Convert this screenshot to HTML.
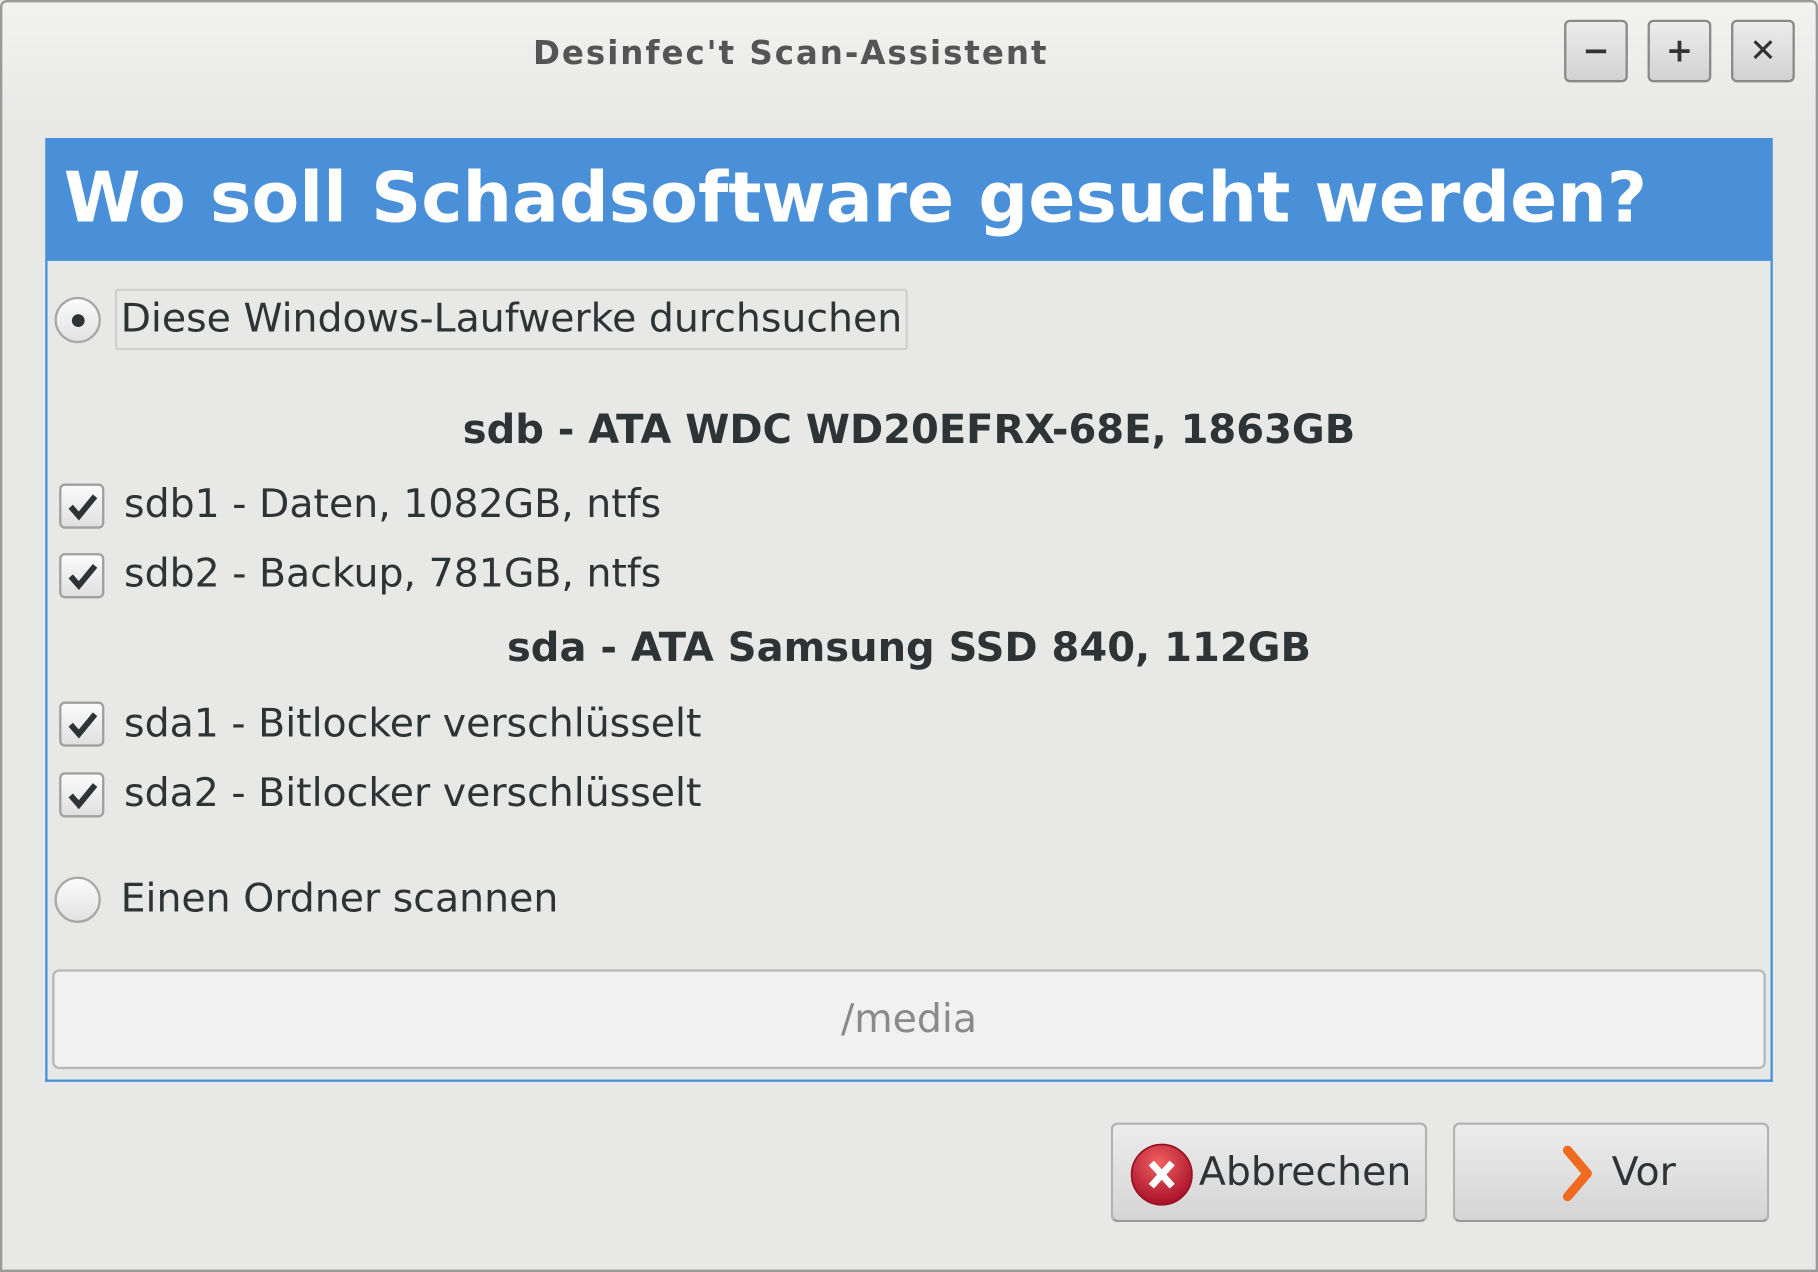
<!DOCTYPE html>
<html><head><meta charset="utf-8"><style>
*{margin:0;padding:0;box-sizing:border-box}
html,body{width:1818px;height:1272px;overflow:hidden;background:#e8e8e7}
#s{position:absolute;left:0;top:0;width:1568px;height:1097px;transform:scale(1.15944,1.15953);transform-origin:0 0;font-family:"DejaVu Sans","Liberation Sans",sans-serif;color:#2e3436}
.win{position:absolute;left:0;top:0;width:1568px;height:1097px;border:2px solid #9a9a9a;border-radius:6px 6px 0 0;background:linear-gradient(#f2f2f1 0,#e8e8e7 110px)}
.title{position:absolute;left:0;width:1364px;top:29px;text-align:center;font-weight:bold;font-size:28px;letter-spacing:1.7px;color:#555}
.wb{position:absolute;top:17px;width:55px;height:54px;border:2px solid #8a8a8a;border-radius:5px;background:linear-gradient(#ececec,#d2d2d2);font-weight:bold;font-size:28px;text-align:center;line-height:50px;color:#333}
.hdr{position:absolute;left:39px;top:119px;width:1490px;height:106px;background:#4a90d9;color:#fff;font-weight:bold;font-size:60px;padding-left:16px;line-height:104px;white-space:nowrap}
.box{position:absolute;left:39px;top:224px;width:1490px;height:709px;border:2px solid #4a90d9;border-top:none}
.t{position:absolute;font-size:34px;white-space:nowrap;line-height:40px}
.b{font-weight:bold;text-align:center;left:0;width:1568px;font-size:34.5px}
.rad{position:absolute;width:40px;height:40px;border-radius:50%;border:2px solid #a8a8a8;background:linear-gradient(#fbfbfb,#e2e2e2)}
.rad.on::after{content:"";position:absolute;left:13px;top:13px;width:11px;height:11px;border-radius:50%;background:#2e3436}
.cb{position:absolute;left:51px;width:39px;height:39px;border:2px solid #a0a0a0;border-radius:5px;background:linear-gradient(#fbfbfb,#e0e0e0)}
.cb svg{position:absolute;left:3px;top:3px}
.entry{position:absolute;left:45px;top:836px;width:1478px;height:86px;border:2px solid #b8b8b8;border-radius:6px;background:#f1f1f1;text-align:center;font-size:34px;line-height:82px;color:#8a8a8a}
.btn{position:absolute;top:968px;width:273px;height:86px;border:2px solid #b3b3b3;border-bottom-color:#999;border-radius:6px;background:linear-gradient(#ececec,#d5d5d5);font-size:34px;line-height:82px}
</style></head><body><div id="s">
<div class="win"></div>
<div class="title">Desinfec't Scan-Assistent</div>
<div class="wb" style="left:1349px">−</div>
<div class="wb" style="left:1421px">+</div>
<div class="wb" style="left:1493px">✕</div>
<div class="hdr">Wo soll Schadsoftware gesucht werden?</div>
<div class="box"></div>
<div class="rad on" style="left:47px;top:256px"></div>
<div style="position:absolute;left:99px;top:249px;width:684px;height:53px;border:2px solid #cfcfcf;border-radius:3px"></div>
<div class="t" style="left:104px;top:255px">Diese Windows-Laufwerke durchsuchen</div>
<div class="t b" style="top:351px">sdb - ATA WDC WD20EFRX-68E, 1863GB</div>
<div class="cb" style="top:417px"><svg width="30" height="30" viewBox="0 0 30 30"><path d="M5 15 L12 23 L26 6" fill="none" stroke="#2e3436" stroke-width="5"/></svg></div>
<div class="t" style="left:107px;top:415px">sdb1 - Daten, 1082GB, ntfs</div>
<div class="cb" style="top:477px"><svg width="30" height="30" viewBox="0 0 30 30"><path d="M5 15 L12 23 L26 6" fill="none" stroke="#2e3436" stroke-width="5"/></svg></div>
<div class="t" style="left:107px;top:475px">sdb2 - Backup, 781GB, ntfs</div>
<div class="t b" style="top:539px">sda - ATA Samsung SSD 840, 112GB</div>
<div class="cb" style="top:605px"><svg width="30" height="30" viewBox="0 0 30 30"><path d="M5 15 L12 23 L26 6" fill="none" stroke="#2e3436" stroke-width="5"/></svg></div>
<div class="t" style="left:107px;top:604px">sda1 - Bitlocker verschlüsselt</div>
<div class="cb" style="top:666px"><svg width="30" height="30" viewBox="0 0 30 30"><path d="M5 15 L12 23 L26 6" fill="none" stroke="#2e3436" stroke-width="5"/></svg></div>
<div class="t" style="left:107px;top:664px">sda2 - Bitlocker verschlüsselt</div>
<div class="rad" style="left:47px;top:756px"></div>
<div class="t" style="left:104px;top:755px">Einen Ordner scannen</div>
<div class="entry">/media</div>
<div class="btn" style="left:958px">
<svg style="position:absolute;left:15px;top:16px" width="54" height="54" viewBox="0 0 54 54"><defs><radialGradient id="r" cx="45%" cy="30%" r="70%"><stop offset="0" stop-color="#f06060"/><stop offset="1" stop-color="#a8102a"/></radialGradient></defs><ellipse cx="27" cy="27" rx="26" ry="26" fill="url(#r)" stroke="#9a1020" stroke-width="1.5"/><path d="M18 17 L36 37 M36 17 L18 37" stroke="#fff" stroke-width="6"/></svg>
<span style="position:absolute;left:74px">Abbrechen</span></div>
<div class="btn" style="left:1253px">
<svg style="position:absolute;left:92px;top:18px" width="30" height="48" viewBox="0 0 30 48"><path d="M5 4 L22 24 L5 44" fill="none" stroke="#ee6b20" stroke-width="8" stroke-linecap="round" stroke-linejoin="round"/></svg>
<span style="position:absolute;left:135px">Vor</span></div>
</div></body></html>
